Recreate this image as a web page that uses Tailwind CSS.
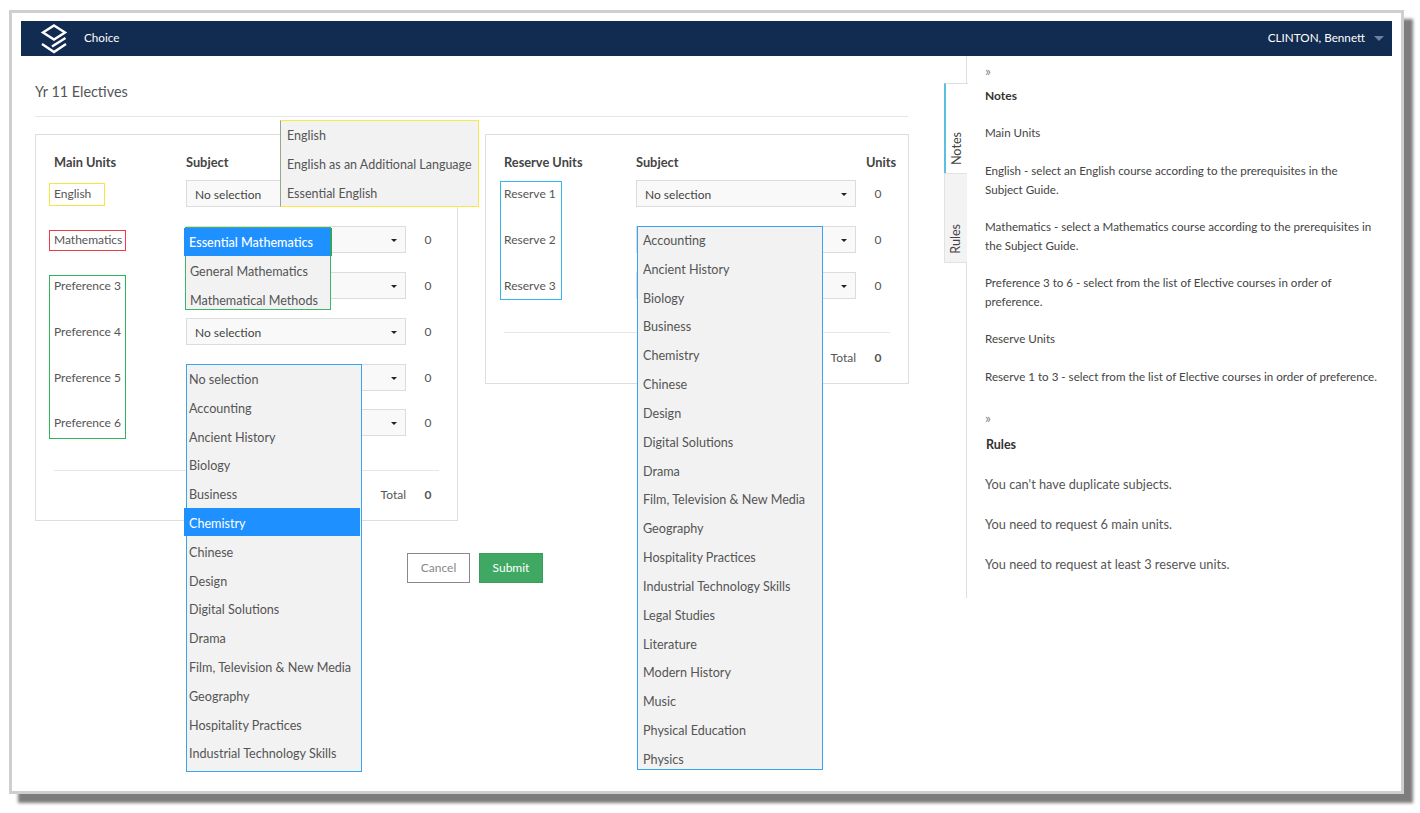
<!DOCTYPE html>
<html lang="en">
<head>
  <meta charset="UTF-8" />
  <title>Choice</title>
  <script src="https://cdn.jsdelivr.net/npm/@tailwindcss/browser@4"></script>
</head>
<body class="relative h-[813px] w-[1420px] overflow-hidden bg-white font-['Lato',sans-serif] text-[12px] text-[#555]">
  <!-- frame -->
  <div class="absolute left-[9px] top-[10px] h-[784px] w-[1395px] border-[3px] border-[#cfcfcf] bg-white pl-[9px] pr-[9px] pt-[8px] shadow-[9px_9px_3px_#7d7d7d]">
    <nav class="flex h-[35px] items-center bg-[#122b50] text-[11.7px] text-white">
      <svg class="ml-[19px] h-[32px] w-[28px]" viewBox="0 0 28 32" fill="none" stroke="#fff" stroke-width="2.4">
        <path d="M14 2.5 L25 9.5 L14 16.5 L3 9.5 Z" />
        <path d="M25.5 15 L12 23.5" />
        <path d="M2 21 L14 29 L26 21" />
      </svg>
      <span class="-mt-[2px] ml-[16px]">Choice</span>
      <span class="-mt-[2px] ml-auto">CLINTON, Bennett</span>
      <span class="ml-[9px] mr-[8px] h-0 w-0 border-x-[5px] border-t-[5px] border-x-transparent border-t-[#6f819b]"></span>
    </nav>

    <div class="flex">
      <!-- left column -->
      <main class="w-[945px] px-[14px]">
        <h1 class="pt-[26px] text-[14.4px] leading-[20px]">Yr 11 Electives</h1>
        <div class="mt-[14px] w-[873px] border-t border-[#e6e6e6]"></div>

        <div class="mt-[17px] flex items-start gap-[27px]">
          <!-- main units -->
          <section class="h-[387px] w-[423px] shrink-0 border border-[#dedede] px-[18px]">
            <div class="-mb-px flex h-[37px] items-end text-[12.8px] font-bold text-[#444]">
              <span class="w-[132px] shrink-0">Main Units</span><span class="w-[230px] shrink-0">Subject</span><span class="shrink-0">Units</span>
            </div>
            <div class="flex h-[46px] items-center"><span class="w-[132px]">English</span>
              <div class="-mt-px flex h-[27px] w-[220px] items-center border border-[#dcdcdc] bg-[#f9f9f9] pl-[8px] pt-[2px] text-[#444]">No selection<span class="ml-auto mr-[8px] h-0 w-0 border-x-[3px] border-t-[3px] border-x-transparent border-t-[#222]"></span></div>
              <span class="ml-[17px] w-[10px] text-center">0</span></div>
            <div class="flex h-[46px] items-center"><span class="w-[132px]">Mathematics</span>
              <div class="-mt-px flex h-[27px] w-[220px] items-center border border-[#dcdcdc] bg-[#f9f9f9] pl-[8px] pt-[2px] text-[#444]"><span class="ml-auto mr-[8px] h-0 w-0 border-x-[3px] border-t-[3px] border-x-transparent border-t-[#222]"></span></div>
              <span class="ml-[17px] w-[10px] text-center">0</span></div>
            <div class="flex h-[46px] items-center"><span class="w-[132px]">Preference 3</span>
              <div class="-mt-px flex h-[27px] w-[220px] items-center border border-[#dcdcdc] bg-[#f9f9f9] pl-[8px] pt-[2px] text-[#444]"><span class="ml-auto mr-[8px] h-0 w-0 border-x-[3px] border-t-[3px] border-x-transparent border-t-[#222]"></span></div>
              <span class="ml-[17px] w-[10px] text-center">0</span></div>
            <div class="flex h-[46px] items-center"><span class="w-[132px]">Preference 4</span>
              <div class="-mt-px flex h-[27px] w-[220px] items-center border border-[#dcdcdc] bg-[#f9f9f9] pl-[8px] pt-[2px] text-[#444]">No selection<span class="ml-auto mr-[8px] h-0 w-0 border-x-[3px] border-t-[3px] border-x-transparent border-t-[#222]"></span></div>
              <span class="ml-[17px] w-[10px] text-center">0</span></div>
            <div class="flex h-[45px] items-center"><span class="w-[132px]">Preference 5</span>
              <div class="-mt-px flex h-[27px] w-[220px] items-center border border-[#dcdcdc] bg-[#f9f9f9] pl-[8px] pt-[2px] text-[#444]"><span class="ml-auto mr-[8px] h-0 w-0 border-x-[3px] border-t-[3px] border-x-transparent border-t-[#222]"></span></div>
              <span class="ml-[17px] w-[10px] text-center">0</span></div>
            <div class="flex h-[46px] items-center"><span class="w-[132px]">Preference 6</span>
              <div class="-mt-px flex h-[27px] w-[220px] items-center border border-[#dcdcdc] bg-[#f9f9f9] pl-[8px] pt-[2px] text-[#444]"><span class="ml-auto mr-[8px] h-0 w-0 border-x-[3px] border-t-[3px] border-x-transparent border-t-[#222]"></span></div>
              <span class="ml-[17px] w-[10px] text-center">0</span></div>
            <div class="mt-[24px] border-t border-[#e6e6e6]"></div>
            <div class="flex h-[48px] items-center"><span class="w-[352px] text-right">Total</span><span class="ml-[17px] w-[10px] text-center font-bold">0</span></div>
          </section>

          <!-- reserve units -->
          <section class="h-[250px] w-[424px] shrink-0 border border-[#dedede] px-[18px]">
            <div class="-mb-px flex h-[37px] items-end text-[12.8px] font-bold text-[#444]">
              <span class="w-[132px] shrink-0">Reserve Units</span><span class="w-[230px] shrink-0">Subject</span><span class="shrink-0">Units</span>
            </div>
            <div class="flex h-[46px] items-center"><span class="w-[132px]">Reserve 1</span>
              <div class="-mt-px flex h-[27px] w-[220px] items-center border border-[#dcdcdc] bg-[#f9f9f9] pl-[8px] pt-[2px] text-[#444]">No selection<span class="ml-auto mr-[8px] h-0 w-0 border-x-[3px] border-t-[3px] border-x-transparent border-t-[#222]"></span></div>
              <span class="ml-[17px] w-[10px] text-center">0</span></div>
            <div class="flex h-[46px] items-center"><span class="w-[132px]">Reserve 2</span>
              <div class="-mt-px flex h-[27px] w-[220px] items-center border border-[#dcdcdc] bg-[#f9f9f9] pl-[8px] pt-[2px] text-[#444]"><span class="ml-auto mr-[8px] h-0 w-0 border-x-[3px] border-t-[3px] border-x-transparent border-t-[#222]"></span></div>
              <span class="ml-[17px] w-[10px] text-center">0</span></div>
            <div class="flex h-[46px] items-center"><span class="w-[132px]">Reserve 3</span>
              <div class="-mt-px flex h-[27px] w-[220px] items-center border border-[#dcdcdc] bg-[#f9f9f9] pl-[8px] pt-[2px] text-[#444]"><span class="ml-auto mr-[8px] h-0 w-0 border-x-[3px] border-t-[3px] border-x-transparent border-t-[#222]"></span></div>
              <span class="ml-[17px] w-[10px] text-center">0</span></div>
            <div class="mt-[23px] border-t border-[#e6e6e6]"></div>
            <div class="flex h-[50px] items-center"><span class="w-[352px] text-right">Total</span><span class="ml-[17px] w-[10px] text-center font-bold">0</span></div>
          </section>
        </div>

        <div class="ml-[372px] mt-[32px] flex gap-[9px]">
          <button class="h-[30px] w-[63px] border border-[#888] text-[#888]">Cancel</button>
          <button class="h-[30px] w-[64px] border border-[#3a9d5d] bg-[#3fa964] text-white">Submit</button>
        </div>
      </main>

      <!-- notes panel -->
      <aside class="relative h-[542px] flex-1 border-l border-[#dedede] pl-[18px] text-[11.6px] leading-[19px] text-[#444]">
        <div class="absolute left-[-23px] top-[27px] flex h-[90px] w-[24px] items-end justify-center border-l-2 border-t border-[#5bc0de] border-t-[#dedede] bg-white pb-[8px] pr-[2px] text-[12.6px]"><span class="rotate-180 [writing-mode:vertical-rl]">Notes</span></div>
        <div class="absolute left-[-23px] top-[117px] flex h-[90px] w-[23px] items-end justify-center border border-r-0 border-[#e2e2e2] bg-[#f3f3f3] pb-[8px] pr-[2px] text-[12.6px]"><span class="rotate-180 [writing-mode:vertical-rl]">Rules</span></div>

        <div class="pt-[6px] text-[14px] leading-[18px] text-[#888]">»</div>
        <p class="mt-[6px] text-[12px] font-bold text-[#333]">Notes</p>
        <p class="mt-[18px]">Main Units</p>
        <p class="mt-[19px]">English - select an English course according to the prerequisites in the<br />Subject Guide.</p>
        <p class="mt-[18px]">Mathematics - select a Mathematics course according to the prerequisites in<br />the Subject Guide.</p>
        <p class="mt-[18px]">Preference 3 to 6 - select from the list of Elective courses in order of<br />preference.</p>
        <p class="mt-[18px]">Reserve Units</p>
        <p class="mt-[19px]">Reserve 1 to 3 - select from the list of Elective courses in order of preference.</p>
        <div class="mt-[23px] text-[14px] leading-[18px] text-[#888]">»</div>
        <p class="mt-[8px] pl-px text-[12.5px] font-bold text-[#333]">Rules</p>
        <div class="text-[12.75px] text-[#555]">
          <p class="mt-[21px]">You can't have duplicate subjects.</p>
          <p class="mt-[21px]">You need to request 6 main units.</p>
          <p class="mt-[20.5px]">You need to request at least 3 reserve units.</p>
        </div>
      </aside>
    </div>
  </div>

  <!-- annotation boxes -->
  <div class="absolute left-[49px] top-[183px] h-[23px] w-[56px] border border-[#f5e642]"></div>
  <div class="absolute left-[49px] top-[230px] h-[21px] w-[77px] border border-[#ef3b47]"></div>
  <div class="absolute left-[49px] top-[275px] h-[164px] w-[77px] border border-[#2fb457]"></div>
  <div class="absolute left-[500px] top-[181px] h-[119px] w-[62px] border border-[#36b4f0]"></div>

  <!-- open dropdowns -->
  <ul class="absolute left-[280px] top-[120px] h-[87px] w-[199px] overflow-hidden whitespace-nowrap border border-[#f7ea45] border-l-[#9aa88a] bg-[#f2f2f2] pl-[6px] text-[12.5px] leading-[29px]">
    <li>English</li><li>English as an Additional Language</li><li>Essential English</li>
  </ul>

  <ul class="absolute left-[185px] top-[227px] h-[83px] w-[146px] overflow-hidden whitespace-nowrap border border-[#3eb46a] bg-[#f2f2f2] pl-[4px] text-[12.6px] leading-[29px]">
    <li class="h-[29px]"></li><li class="h-[29px]">General Mathematics</li><li class="h-[29px]">Mathematical Methods</li>
  </ul>
  <div class="absolute left-[184px] top-[228px] h-[28px] w-[148px] border-r-2 border-[#2fa56a] bg-[#1e90ff] pl-[5px] text-[12.6px] font-medium leading-[29px] text-white">Essential Mathematics</div>

  <ul class="absolute left-[186px] top-[364px] h-[408px] w-[176px] overflow-hidden whitespace-nowrap border border-[#36a5ec] bg-[#f2f2f2] pl-[2px] pt-px text-[12.6px] leading-[28.8px]">
    <li>No selection</li><li>Accounting</li><li>Ancient History</li><li>Biology</li><li>Business</li><li>&nbsp;</li><li>Chinese</li><li>Design</li><li>Digital Solutions</li><li>Drama</li><li>Film, Television &amp; New Media</li><li>Geography</li><li>Hospitality Practices</li><li>Industrial Technology Skills</li>
  </ul>
  <div class="absolute left-[184px] top-[508px] h-[28px] w-[176px] bg-[#1e90ff] pl-[5px] text-[12.6px] leading-[31px] text-white">Chemistry</div>

  <ul class="absolute left-[637px] top-[226px] h-[544px] w-[186px] overflow-hidden whitespace-nowrap border border-[#36a5ec] bg-[#f2f2f2] pl-[5px] text-[12.6px] leading-[28.83px]">
    <li>Accounting</li><li>Ancient History</li><li>Biology</li><li>Business</li><li>Chemistry</li><li>Chinese</li><li>Design</li><li>Digital Solutions</li><li>Drama</li><li>Film, Television &amp; New Media</li><li>Geography</li><li>Hospitality Practices</li><li>Industrial Technology Skills</li><li>Legal Studies</li><li>Literature</li><li>Modern History</li><li>Music</li><li>Physical Education</li><li>Physics</li>
  </ul>
</body>
</html>
